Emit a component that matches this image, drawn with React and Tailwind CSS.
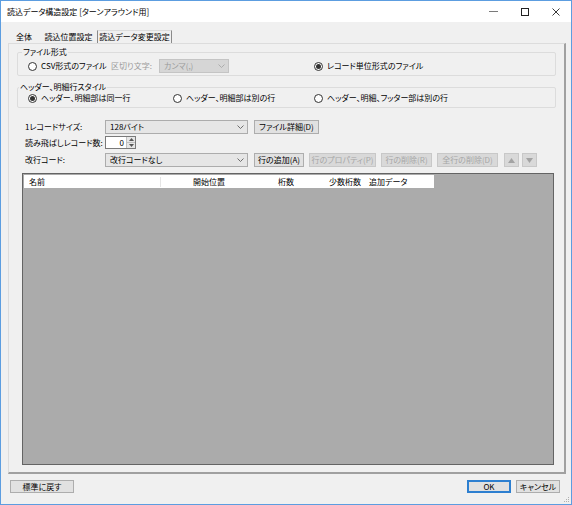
import React from 'react'

const font = "font-['Noto_Sans_CJK_JP','Noto_Sans',sans-serif] [font-feature-settings:'palt']"

function Radio({ checked, label, className = '' }) {
  return (
    <span className={`flex items-center gap-[4px] ${className}`}>
      <span className="flex h-[9px] w-[9px] shrink-0 items-center justify-center rounded-full border border-[#333333] bg-white">
        {checked && <span className="h-[5px] w-[5px] rounded-full bg-[#333333]" />}
      </span>
      <span className="whitespace-nowrap">{label}</span>
    </span>
  )
}

function Chevron({ color = '#606060' }) {
  return (
    <svg width="7" height="4" viewBox="0 0 7 4">
      <path d="M0.5 0.5 L3.5 3.5 L6.5 0.5" fill="none" stroke={color} strokeWidth="0.9" />
    </svg>
  )
}

function Combo({ value, width, disabled }) {
  return (
    <div
      className={`flex h-full items-center justify-between border pl-[4px] pr-[3px] ${width} ${
        disabled ? 'border-[#c4c4c4] bg-[#d6d6d6] text-[#9a9a9a]' : 'border-[#acacac] bg-[#e6e6e6] text-black'
      }`}
    >
      <span className="whitespace-nowrap">{value}</span>
      <Chevron color={disabled ? '#a8a8a8' : '#606060'} />
    </div>
  )
}

function Btn({ label, width, disabled, primary }) {
  return (
    <div
      className={`flex h-full items-center justify-center whitespace-nowrap ${width} ${
        disabled
          ? 'border border-[#c8c8c8] bg-[#d9d9d9] text-[#a6a6a6]'
          : primary
          ? 'border-2 border-[#2d7fd0] bg-[#e1e1e1] text-black'
          : 'border border-[#adadad] bg-[#e1e1e1] text-black'
      }`}
    >
      {label}
    </div>
  )
}

function Tri({ up }) {
  return (
    <svg width="7" height="5" viewBox="0 0 7 5">
      <path d={up ? 'M3.5 0 L7 5 L0 5 Z' : 'M0 0 L7 0 L3.5 5 Z'} fill="#a3a3a3" />
    </svg>
  )
}

export default function App() {
  return (
    <div className={`flex h-[505px] w-[572px] flex-col border border-[#5c9de0] bg-[#f0f0f0] text-[8px] leading-[10px] text-black ${font}`}>
      {/* title bar */}
      <div className="flex h-[21px] items-center bg-white">
        <span className="pl-[6px] text-[8px]">読込データ構造設定 [ターンアラウンド用]</span>
        <div className="ml-auto flex h-full">
          <div className="flex w-[31px] items-center justify-center">
            <span className="h-px w-[9px] bg-[#7a7a7a]" />
          </div>
          <div className="flex w-[31px] items-center justify-center">
            <span className="h-[8px] w-[8px] border border-[#222222]" />
          </div>
          <div className="flex w-[31px] items-center justify-center">
            <svg width="8" height="8" viewBox="0 0 8 8">
              <path d="M0.5 0.5 L7.5 7.5 M7.5 0.5 L0.5 7.5" stroke="#222" strokeWidth="0.9" />
            </svg>
          </div>
        </div>
      </div>

      {/* tabs */}
      <div className="mt-[8px] flex h-[13px] items-stretch pl-[7px]">
        <div className="flex w-[32px] items-center justify-center">全体</div>
        <div className="flex w-[57px] items-center justify-center">読込位置設定</div>
        <div className="flex w-[75px] items-center justify-center border-x border-x-[#8a8a8a] border-t border-t-[#dcdcdc]">
          読込データ変更設定
        </div>
      </div>

      {/* panel */}
      <div className="ml-[7px] flex h-[431px] w-[558px] flex-col border-l border-t border-[#dcdcdc] border-b-2 border-r-2 border-b-[#a0a0a0] border-r-[#a0a0a0]">
        <fieldset className="mx-[8px] mt-[3px] rounded-[2px] border border-[#dcdcdc] p-0">
          <legend className="ml-[4px] px-[1px]">ファイル形式</legend>
          <div className="mb-[2px] mt-[2px] flex h-[14px] items-center pl-[10px]">
            <Radio label="CSV形式のファイル" className="w-[83px]" />
            <span className="w-[48px] text-[#9a9a9a]">区切り文字:</span>
            <Combo value="カンマ(,)" width="w-[70px]" disabled />
            <Radio checked label="レコード単位形式のファイル" className="ml-[85px]" />
          </div>
        </fieldset>

        <fieldset className="mx-[8px] mt-[6px] rounded-[2px] border border-[#dcdcdc] p-0">
          <legend className="ml-[1px] px-[1px]">ヘッダー、明細行スタイル</legend>
          <div className="mb-[3px] flex h-[12px] items-center pl-[10px]">
            <Radio checked label="ヘッダー、明細部は同一行" className="w-[145px]" />
            <Radio label="ヘッダー、明細部は別の行" className="w-[141px]" />
            <Radio label="ヘッダー、明細、フッター部は別の行" />
          </div>
        </fieldset>

        <div className="mt-[12px] flex h-[14px] items-center pl-[16px]">
          <span className="w-[80px]">1レコードサイズ:</span>
          <Combo value="128バイト" width="w-[143px]" />
          <div className="ml-[6px] h-full">
            <Btn label="ファイル詳細(D)" width="w-[65px]" />
          </div>
        </div>

        <div className="mt-[2px] flex h-[13px] items-center pl-[16px]">
          <span className="w-[80px]">読み飛ばしレコード数:</span>
          <div className="flex h-full w-[31px] border border-[#7a7a7a] bg-white">
            <span className="flex flex-1 items-center justify-end pr-[2px]">0</span>
            <div className="flex w-[9px] flex-col border-l border-[#c0c0c0] bg-[#e6e6e6]">
              <div className="flex flex-1 items-center justify-center border-b border-[#c0c0c0]">
                <svg width="5" height="3" viewBox="0 0 5 3"><path d="M2.5 0 L5 3 L0 3 Z" fill="#555" /></svg>
              </div>
              <div className="flex flex-1 items-center justify-center">
                <svg width="5" height="3" viewBox="0 0 5 3"><path d="M0 0 L5 0 L2.5 3 Z" fill="#555" /></svg>
              </div>
            </div>
          </div>
        </div>

        <div className="mt-[4px] flex h-[14px] items-center pl-[16px]">
          <span className="w-[80px]">改行コード:</span>
          <Combo value="改行コードなし" width="w-[143px]" />
          <div className="ml-[6px] flex h-full gap-[5px]">
            <Btn label="行の追加(A)" width="w-[50px]" />
            <Btn label="行のプロパティ(P)" width="w-[67px]" disabled />
            <Btn label="行の削除(R)" width="w-[51px]" disabled />
            <Btn label="全行の削除(D)" width="w-[61px]" disabled />
            <div className="ml-[1px] flex h-full w-[15px] items-center justify-center border border-[#c8c8c8] bg-[#d9d9d9]">
              <Tri up />
            </div>
            <div className="ml-[-2px] flex h-full w-[15px] items-center justify-center border border-[#c8c8c8] bg-[#d9d9d9]">
              <Tri />
            </div>
          </div>
        </div>

        <div className="mb-[7px] ml-[13px] mr-[10px] mt-[6px] flex-1 border border-[#646464] bg-[#ababab] p-px">
          <div className="flex h-[13px] w-[410px] items-center bg-white">
            <span className="w-[137px] border-r border-[#e5e5e5] pl-[5px]">名前</span>
            <span className="w-[68px] pr-[4px] text-right">開始位置</span>
            <span className="w-[69px] pr-[4px] text-right">桁数</span>
            <span className="w-[67px] pr-[4px] text-right">少数桁数</span>
            <span className="pl-[4px]">追加データ</span>
          </div>
        </div>
      </div>

      {/* bottom bar */}
      <div className="relative flex flex-1 items-start pl-[9px] pr-[11px] pt-[6px]">
        <div className="h-[13px]">
          <Btn label="標準に戻す" width="w-[64px]" />
        </div>
        <div className="ml-auto flex h-[13px] gap-[5px]">
          <Btn label="OK" width="w-[44px]" primary />
          <Btn label="キャンセル" width="w-[44px]" />
        </div>
        <svg className="absolute bottom-[1px] right-[1px]" width="8" height="8" viewBox="0 0 8 8">
          <rect x="6" y="2" width="1" height="1" fill="#b0b0b0" />
          <rect x="4" y="4" width="1" height="1" fill="#b0b0b0" />
          <rect x="6" y="4" width="1" height="1" fill="#b0b0b0" />
          <rect x="2" y="6" width="1" height="1" fill="#b0b0b0" />
          <rect x="4" y="6" width="1" height="1" fill="#b0b0b0" />
          <rect x="6" y="6" width="1" height="1" fill="#b0b0b0" />
        </svg>
      </div>
    </div>
  )
}
